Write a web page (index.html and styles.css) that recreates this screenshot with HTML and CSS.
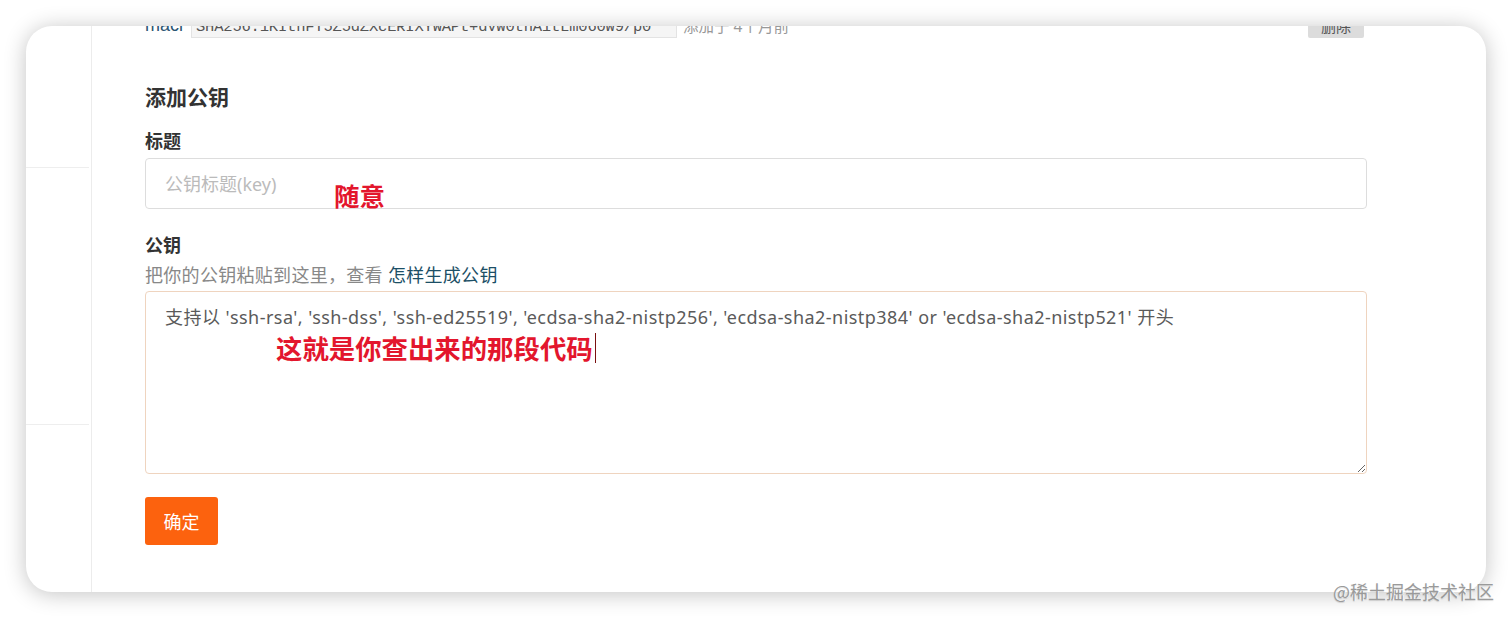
FILE: index.html
```html
<!DOCTYPE html>
<html lang="zh-CN">
<head>
<meta charset="utf-8">
<title>添加公钥</title>
<link rel="stylesheet" href="styles.css">
</head>
<body>
<div class="card">
  <aside class="sidebar">
    <div class="side-block side-block-1"></div>
    <div class="side-block side-block-2"></div>
  </aside>
  <main class="main">
    <div class="key-row">
      <span class="key-name">macl</span>
      <code class="key-fp">SHA256:1KIthFT5Z5dZXcERIXYWAPt+dVW0thA1tLm060W9/p0</code>
      <span class="key-time">添加于 4个月前</span>
      <button class="btn-delete">删除</button>
    </div>

    <h3 class="section-title">添加公钥</h3>

    <div class="field">
      <label class="field-label">标题</label>
      <div class="input-wrap">
        <input class="text-input" type="text" placeholder="公钥标题(key)">
        <span class="note note-title">随意</span>
      </div>
    </div>

    <div class="field field-key">
      <label class="field-label">公钥</label>
      <p class="help">把你的公钥粘贴到这里，查看 <a class="help-link" href="#">怎样生成公钥</a></p>
      <div class="input-wrap">
        <textarea class="text-area" placeholder="支持以 'ssh-rsa', 'ssh-dss', 'ssh-ed25519', 'ecdsa-sha2-nistp256', 'ecdsa-sha2-nistp384' or 'ecdsa-sha2-nistp521' 开头"></textarea>
        <span class="note note-key">这就是你查出来的那段代码<span class="caret"></span></span>
      </div>
    </div>

    <button class="btn-submit">确定</button>
  </main>
</div>
<div class="watermark">@稀土掘金技术社区</div>
</body>
</html>
```

FILE: styles.css
```css
* { box-sizing: border-box; }

html, body {
  margin: 0;
  padding: 0;
  background: #ffffff;
  font-family: "Noto Sans", "Noto Sans CJK SC", sans-serif;
  color: #333;
}

body {
  padding: 26px 26px 27px 26px;
  height: 619px;
  overflow: hidden;
  position: relative;
}

.card {
  width: 1460px;
  height: 566px;
  background: #fff;
  border-radius: 26px;
  overflow: hidden;
  box-shadow: 0 2px 22px rgba(0, 0, 0, 0.24);
  display: flex;
}

.sidebar {
  width: 66px;
  flex: none;
  border-right: 1px solid #ececec;
  display: flex;
  flex-direction: column;
}

.side-block {
  border-bottom: 1px solid #eeeeee;
  margin-right: 2px;
}
.side-block-1 { height: 142px; }
.side-block-2 { height: 257px; }

.main {
  flex: 1;
  padding: 0 119px 0 53px;
  display: flex;
  flex-direction: column;
  align-items: flex-start;
}

.key-row {
  margin-top: -13px;
  width: 100%;
  height: 25px;
  display: flex;
  align-items: center;
}

.key-name {
  font-family: "Liberation Sans", sans-serif;
  font-size: 18px;
  color: #2b5573;
  margin-right: 8px;
}

.key-fp {
  font-family: "Liberation Mono", monospace;
  font-size: 15.5px;
  color: #555;
  background: #f5f5f5;
  border: 1px solid #e3e3e3;
  padding: 2px 4px;
  height: 24px;
  line-height: 20px;
  width: 486px;
  overflow: hidden;
  white-space: nowrap;
  letter-spacing: -0.2px;
}

.key-time {
  font-size: 15.5px;
  color: #999;
  margin-left: 6px;
}

.btn-delete {
  margin-left: auto;
  margin-right: 3px;
  width: 56px;
  height: 25px;
  border: none;
  border-radius: 2px;
  background: #dcdcdc;
  color: #555;
  font-size: 15px;
  font-family: "Noto Sans CJK SC", sans-serif;
  padding: 0;
}

.section-title {
  margin: 44px 0 0 0;
  font-size: 21px;
  line-height: 28px;
  font-weight: 600;
  color: #333;
  font-family: "Noto Sans CJK SC", sans-serif;
}

.field {
  width: 100%;
  margin-top: 19px;
}

.field-label {
  display: block;
  font-size: 18px;
  line-height: 22px;
  font-weight: 700;
  color: #333;
  font-family: "Noto Sans CJK SC", sans-serif;
}

.input-wrap {
  position: relative;
  width: 100%;
}

.text-input {
  display: block;
  width: 100%;
  height: 51px;
  margin-top: 7px;
  border: 1px solid #dddddd;
  border-radius: 4px;
  padding: 0 19px;
  font-size: 18px;
  font-family: "Noto Sans", "Noto Sans CJK SC", sans-serif;
  color: #333;
  outline: none;
}
.text-input::placeholder { color: #bbbbbb; }

.field-key { margin-top: 24px; }

.help {
  margin: 9px 0 0 0;
  font-size: 18px;
  line-height: 22px;
  color: #888;
  letter-spacing: 0.3px;
}

.help-link {
  color: #1c4f66;
  text-decoration: none;
}

.text-area {
  display: block;
  width: 100%;
  height: 183px;
  margin-top: 5px;
  border: 1px solid #efd4bf;
  border-radius: 4px;
  padding: 13px 19px;
  font-size: 18px;
  line-height: 24px;
  letter-spacing: 0.45px;
  font-family: "Noto Sans", "Noto Sans CJK SC", sans-serif;
  color: #333;
  outline: none;
  resize: vertical;
}
.text-area::placeholder { color: #5a5a5a; }

.note {
  position: absolute;
  color: #e3162d;
  font-weight: 700;
  font-family: "Noto Sans CJK SC", sans-serif;
  white-space: nowrap;
}

.note-title {
  left: 189px;
  top: 22px;
  font-size: 25.5px;
  line-height: 30px;
}

.note-key {
  left: 131px;
  top: 40px;
  font-size: 26.4px;
  line-height: 34px;
  display: flex;
  align-items: center;
}

.caret {
  display: inline-block;
  width: 1px;
  height: 30px;
  background: #7a1010;
  margin-left: 2px;
}

.btn-submit {
  margin-top: 23px;
  width: 73px;
  height: 48px;
  border: none;
  border-radius: 3px;
  background: #fc620e;
  color: #fff;
  font-size: 18px;
  font-family: "Noto Sans CJK SC", sans-serif;
  padding: 0;
}

.watermark {
  position: absolute;
  right: 18px;
  bottom: 17px;
  font-size: 18px;
  line-height: 22px;
  color: #9a9a9a;
  font-family: "Noto Sans CJK SC", sans-serif;
  text-shadow: 1px 0 0 rgba(255,255,255,0.8), 0 1px 1px rgba(0,0,0,0.15);
}
```
